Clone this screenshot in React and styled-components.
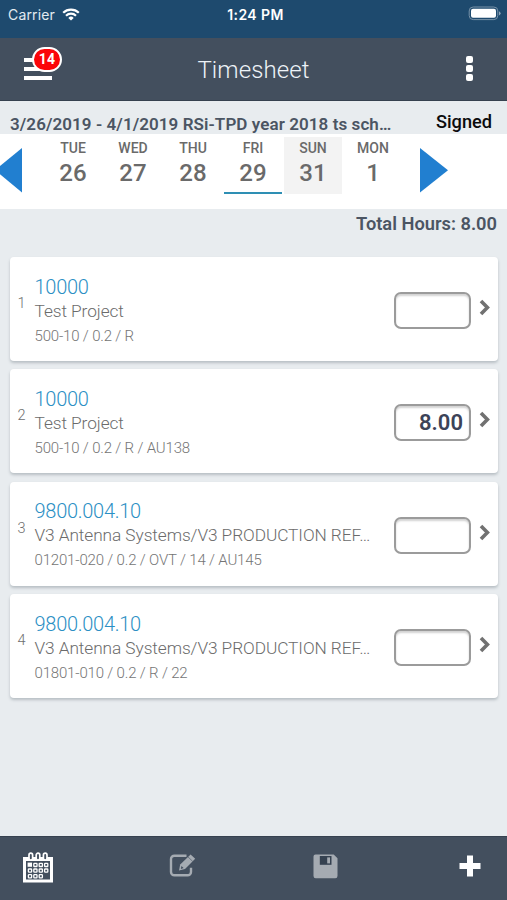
import React from 'react';
import styled, { createGlobalStyle } from 'styled-components';

const GlobalStyle = createGlobalStyle`
    *{
        box-sizing:border-box;
    }
    body{
        margin:0;
        background:#e8ecef;
        font-family:Roboto, "Liberation Sans", sans-serif;
    }
    `;

const Screen = styled.div`
    display:flex;
    flex-direction:column;
    width:507px;
    height:900px;
    overflow:hidden;
    background:#e8ecef;
    `;

const StatusBar = styled.div`
    display:grid;
    grid-template-columns:1fr auto 1fr;
    align-items:center;
    height:38px;
    padding:0 6px 10px 8px;
    background:#1e4a6e;
    color:#fff;
    `;

const Carrier = styled.div`
    display:flex;
    align-items:center;
    gap:7px;
    font-family:Inter, sans-serif;
    font-size:14px;
    letter-spacing:0.15px;
    color:#e3ebf1;
    `;

const Clock = styled.div`
    padding-left:2px;
    font-family:Inter, sans-serif;
    font-size:14px;
    font-weight:600;
    letter-spacing:0.4px;
    `;

const BatteryIcon = styled.svg`
    justify-self:end;
    margin-top:-1px;
    `;

const Header = styled.header`
    display:grid;
    grid-template-columns:60px 1fr 60px;
    align-items:center;
    height:63px;
    background:#434f5e;
    border-bottom:1px solid #36414f;
    `;

const MenuButton = styled.div`
    position:relative;
    display:flex;
    flex-direction:column;
    gap:5px;
    width:28px;
    margin:0 0 0 24px;
    `;

const MenuLine = styled.span`
    height:4px;
    background:#fff;
    `;

const Badge = styled.span`
    position:absolute;
    left:8px;
    top:-11px;
    width:30px;
    height:25px;
    border:2px solid #fff;
    border-radius:13px;
    background:#fb0509;
    color:#fff;
    font-size:14px;
    font-weight:700;
    line-height:21px;
    letter-spacing:0.2px;
    text-align:center;
    `;

const Title = styled.h1`
    margin:2px 0 0;
    font-size:24px;
    font-weight:300;
    letter-spacing:0.1px;
    text-align:center;
    color:#eef3f8;
    `;

const MoreButton = styled.div`
    display:flex;
    flex-direction:column;
    gap:2px;
    margin:-2px 0 0 19px;
    `;

const MoreDot = styled.span`
    width:7px;
    height:7px;
    border-radius:2px;
    background:#fff;
    `;

const PeriodRow = styled.div`
    display:flex;
    justify-content:space-between;
    height:33px;
    padding:0 15px 0 10px;
    `;

const Period = styled.div`
    padding-top:12px;
    font-size:17px;
    font-weight:600;
    line-height:22px;
    letter-spacing:0.08px;
    color:#4b5563;
    white-space:nowrap;
    `;

const Status = styled.div`
    padding-top:10px;
    font-size:18.2px;
    font-weight:500;
    line-height:22px;
    color:#0b0b0c;
    `;

const DayStrip = styled.div`
    display:flex;
    height:75px;
    background:#fff;
    `;

const ArrowIcon = styled.svg`
    flex:none;
    margin-top:14px;
    `;

const Days = styled.div`
    display:flex;
    gap:2px;
    margin:3px 18px 0 22px;
    `;

const Day = styled.div`
    width:58px;
    height:57px;
    padding-top:2px;
    text-align:center;
    color:#6a6a6a;
    background:${({ $shaded }) => ($shaded ? '#f3f3f3' : 'transparent')};
    border-bottom:2px solid ${({ $selected }) => ($selected ? '#2e8fb4' : 'transparent')};
    `;

const DayName = styled.div`
    font-size:14px;
    font-weight:500;
    line-height:18px;
    `;

const DayNumber = styled.div`
    margin-top:4px;
    font-size:24px;
    font-weight:500;
    line-height:24px;
    `;

const Total = styled.div`
    height:48px;
    padding:4px 10px 0 0;
    text-align:right;
    font-size:18.3px;
    font-weight:600;
    line-height:22px;
    color:#4b5563;
    `;

const Entries = styled.main`
    display:flex;
    flex:1;
    flex-direction:column;
    gap:8.4px;
    padding:0 9px 0 10px;
    `;

const Card = styled.div`
    display:flex;
    align-items:center;
    height:104px;
    padding-right:7px;
    background:#fff;
    border-radius:4px;
    box-shadow:0 2px 3px rgba(60, 75, 85, 0.28);
    `;

const Index = styled.div`
    flex:none;
    width:25px;
    padding:0 2px 11px 0;
    text-align:center;
    font-size:14.5px;
    font-weight:300;
    color:#6e6e6e;
    `;

const Details = styled.div`
    flex:none;
    width:344px;
    margin-left:-0.5px;
    padding-top:5px;
    white-space:nowrap;
    font-weight:300;
    `;

const Code = styled.div`
    font-size:20px;
    line-height:24px;
    letter-spacing:-0.28px;
    color:#2b8fc4;
    `;

const Name = styled.div`
    font-size:17.3px;
    line-height:25px;
    letter-spacing:-0.08px;
    color:#6b6b6b;
    `;

const Meta = styled.div`
    font-size:15px;
    line-height:25px;
    letter-spacing:-0.17px;
    color:#757575;
    `;

const Hours = styled.div`
    flex:none;
    width:77px;
    height:37px;
    margin:3px 8px 0 15.5px;
    padding-right:6px;
    border:2px solid #9b9b9b;
    border-radius:7px;
    box-shadow:inset 0 2px 2px rgba(0, 0, 0, 0.18);
    text-align:right;
    font-size:22px;
    font-weight:600;
    line-height:34px;
    color:#3c4358;
    `;

const ChevronIcon = styled.svg`
    flex:none;
    margin-bottom:3px;
    `;

const Toolbar = styled.footer`
    display:grid;
    grid-template-columns:147px 144px 146px 22px;
    align-items:start;
    height:64px;
    padding:15px 0 0 22px;
    background:#434f5e;
    border-top:1px solid #36414f;
    `;

const ToolButton = styled.div`
    margin-top:${({ $top }) => $top || 0}px;
    line-height:0;
    opacity:${({ $disabled }) => ($disabled ? 0.52 : 1)};
    `;

const days = [
  { name: 'TUE', number: 26 },
  { name: 'WED', number: 27 },
  { name: 'THU', number: 28 },
  { name: 'FRI', number: 29, selected: true },
  { name: 'SUN', number: 31, shaded: true },
  { name: 'MON', number: 1 },
];

const entries = [
  { code: '10000', name: 'Test Project', meta: '500-10 / 0.2 / R', hours: '' },
  { code: '10000', name: 'Test Project', meta: '500-10 / 0.2 / R / AU138', hours: '8.00' },
  {
    code: '9800.004.10',
    name: 'V3 Antenna Systems/V3 PRODUCTION REF…',
    meta: '01201-020 / 0.2 / OVT / 14 / AU145',
    hours: '',
  },
  {
    code: '9800.004.10',
    name: 'V3 Antenna Systems/V3 PRODUCTION REF…',
    meta: '01801-010 / 0.2 / R / 22',
    hours: '',
  },
];

const Wifi = () => (
  <svg width="18" height="13" viewBox="0 0 18 13" fill="none" stroke="#fff" strokeWidth="2.2">
    <path d="M1.2 4.7a11.2 11.2 0 0 1 15.6 0" />
    <path d="M4 7.7a7.2 7.2 0 0 1 10 0" />
    <path d="M9 12.6 6.3 9.9a3.9 3.9 0 0 1 5.4 0z" fill="#fff" stroke="none" />
  </svg>
);

const Battery = () => (
  <BatteryIcon width="33" height="15" viewBox="0 0 33 15">
    <rect x="1.2" y="1" width="28.6" height="12.6" rx="4" fill="none" stroke="#7892a8" />
    <rect x="3" y="2.8" width="25" height="9" rx="2" fill="#fff" />
    <path d="M31 5.2q1.6.8 1.6 2.1T31 9.4z" fill="#8ea5b8" />
  </BatteryIcon>
);

const Chevron = () => (
  <ChevronIcon width="12" height="17" viewBox="0 0 12 17" fill="none" stroke="#717171" strokeWidth="3.6">
    <path d="M2 2 8.4 8.5 2 15" />
  </ChevronIcon>
);

const Calendar = () => (
  <svg width="32" height="31" viewBox="0 0 32 31">
    <path fill="#fff" fillRule="evenodd" d="M1 5h30v25.5H1zM4 9v18.5h24V9z" />
    <g fill="#434f5e" stroke="#fff" strokeWidth="1.7">
      <rect x="7" y="1.2" width="3.6" height="6.8" rx="1.8" />
      <rect x="14.2" y="1.2" width="3.6" height="6.8" rx="1.8" />
      <rect x="21.4" y="1.2" width="3.6" height="6.8" rx="1.8" />
    </g>
    <rect x="5.6" y="10.6" width="4.4" height="4.2" fill="#fff" />
    <g fill="none" stroke="#fff" strokeWidth="1.3">
      {[
        [1, 0], [2, 0], [3, 0],
        [0, 1], [1, 1], [2, 1], [3, 1],
        [0, 2], [1, 2], [2, 2],
      ].map(([col, row]) => (
        <rect
          key={`${col}-${row}`}
          x={6.4 + col * 5.4}
          y={11.3 + row * 5.7}
          width="3.2"
          height="3.2"
          rx="0.6"
        />
      ))}
    </g>
  </svg>
);

const Edit = () => (
  <svg width="27" height="25" viewBox="0 0 27 25">
    <path
      d="M17.5 2.7H5.4a3.4 3.4 0 0 0-3.4 3.4v12.8a3.4 3.4 0 0 0 3.4 3.4h13.2a3.4 3.4 0 0 0 3.4-3.4v-4.2"
      fill="none"
      stroke="#fff"
      strokeWidth="2.4"
    />
    <path d="M21.6 1.4 26.2 5.8 16 16l-6 1.6 1.2-6z" fill="#fff" />
    <path d="m12.4 13 2.2 2.1-2.7.8z" fill="#434f5e" />
    <path d="m19 3.9 4.6 4.4" stroke="#434f5e" strokeWidth="0.6" />
  </svg>
);

const Save = () => (
  <svg width="25" height="25" viewBox="0 0 25 25">
    <path d="M2.5.5h18.2l3.8 3.8V22a2.2 2.2 0 0 1-2.2 2.2H2.7A2.2 2.2 0 0 1 .5 22V2.5a2 2 0 0 1 2-2z" fill="#fff" />
    <path d="M6.8 2h11.7v8.8H6.8z" fill="#2a3645" />
    <path d="M14.2 3.4H17v6h-2.8z" fill="#fff" />
  </svg>
);

const Plus = () => (
  <svg width="22" height="22" viewBox="0 0 22 22">
    <path d="M8 .5h6V8h7.5v6H14v7.5H8V14H.5V8H8z" fill="#fff" />
  </svg>
);

const Timesheet = () => {
  return (
    <Screen>
      <GlobalStyle />
      <StatusBar>
        <Carrier>
          Carrier
          <Wifi />
        </Carrier>
        <Clock>1:24 PM</Clock>
        <Battery />
      </StatusBar>
      <Header>
        <MenuButton>
          <MenuLine />
          <MenuLine />
          <MenuLine />
          <Badge>14</Badge>
        </MenuButton>
        <Title>Timesheet</Title>
        <MoreButton>
          <MoreDot />
          <MoreDot />
          <MoreDot />
        </MoreButton>
      </Header>
      <PeriodRow>
        <Period>3/26/2019 - 4/1/2019 RSi-TPD year 2018 ts sch…</Period>
        <Status>Signed</Status>
      </PeriodRow>
      <DayStrip>
        <ArrowIcon width="22" height="45" viewBox="0 0 22 45">
          <path d="M22 0v44.5L-5 22.2z" fill="#217fd0" />
        </ArrowIcon>
        <Days>
          {days.map((day) => (
            <Day key={day.name} $selected={day.selected} $shaded={day.shaded}>
              <DayName>{day.name}</DayName>
              <DayNumber>{day.number}</DayNumber>
            </Day>
          ))}
        </Days>
        <ArrowIcon width="28" height="45" viewBox="0 0 28 45">
          <path d="M0 0v44.5l28-22.3z" fill="#217fd0" />
        </ArrowIcon>
      </DayStrip>
      <Total>Total Hours: 8.00</Total>
      <Entries>
        {entries.map((entry, i) => (
          <Card key={i}>
            <Index>{i + 1}</Index>
            <Details>
              <Code>{entry.code}</Code>
              <Name>{entry.name}</Name>
              <Meta>{entry.meta}</Meta>
            </Details>
            <Hours>{entry.hours}</Hours>
            <Chevron />
          </Card>
        ))}
      </Entries>
      <Toolbar>
        <ToolButton><Calendar /></ToolButton>
        <ToolButton $top={1} $disabled><Edit /></ToolButton>
        <ToolButton $top={2} $disabled><Save /></ToolButton>
        <ToolButton $top={3}><Plus /></ToolButton>
      </Toolbar>
    </Screen>
  );
};

export default Timesheet;
